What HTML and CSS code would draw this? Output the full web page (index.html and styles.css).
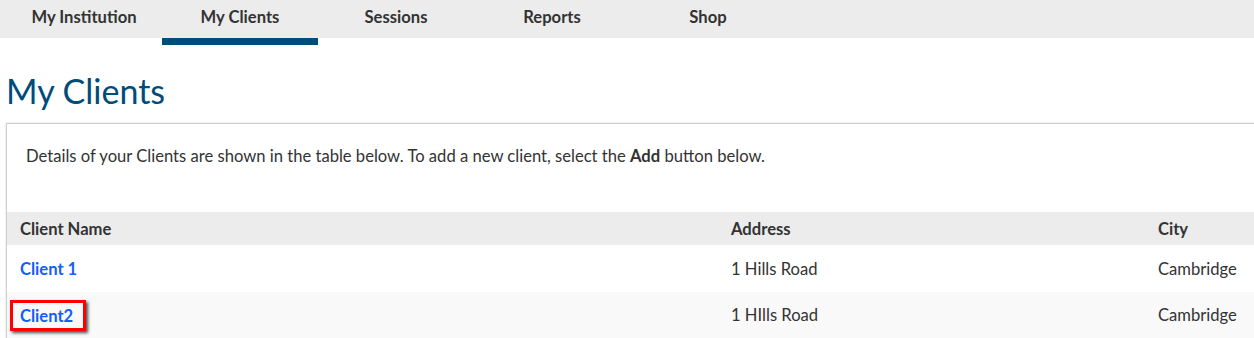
FILE: index.html
```html
<!DOCTYPE html>
<html lang="en">
<head>
  <meta charset="UTF-8" />
  <meta name="viewport" content="width=device-width, initial-scale=1.0"/>
  <title>My Clients</title>
  <link rel="stylesheet" href="styles.css">
</head>
<body>
  <nav class="topnav">
    <a class="tab" href="#">My Institution</a>
    <a class="tab active" href="#">My Clients</a>
    <a class="tab" href="#">Sessions</a>
    <a class="tab" href="#">Reports</a>
    <a class="tab" href="#">Shop</a>
  </nav>

  <h1 class="page-title">My Clients</h1>

  <div class="panel">
    <p class="intro">Details of your Clients are shown in the table below. To add a new client, select the <strong>Add</strong> button below.</p>

    <table class="clients">
      <colgroup>
        <col class="col-name">
        <col class="col-address">
        <col>
      </colgroup>
      <thead>
        <tr>
          <th>Client Name</th>
          <th>Address</th>
          <th>City</th>
        </tr>
      </thead>
      <tbody>
        <tr>
          <td><a href="#" class="client-link">Client 1</a></td>
          <td>1 Hills Road</td>
          <td>Cambridge</td>
        </tr>
        <tr class="alt">
          <td><a href="#" class="client-link highlight">Client2</a></td>
          <td>1 HIlls Road</td>
          <td>Cambridge</td>
        </tr>
      </tbody>
    </table>
  </div>
</body>
</html>
```

FILE: styles.css
```css
html, body {
  overflow: hidden;
}
body {
  margin: 0;
  background: #fff;
  color: #333;
  font-family: Lato, 'Liberation Sans', sans-serif;
  font-size: 16.6px;
}
.topnav {
  display: flex;
  height: 45px;
  padding-left: 6px;
  background: linear-gradient(#ececec 38px, #fff 38px);
}
.tab {
  width: 156px;
  height: 38px;
  line-height: 34px;
  text-align: center;
  color: #333;
  font-weight: bold;
  text-decoration: none;
  border-bottom: 7px solid transparent;
}
.tab.active {
  border-bottom-color: #004c79;
}
.page-title {
  margin: 24px 0 0 6px;
  font-size: 34px;
  font-weight: normal;
  line-height: 44px;
  color: #004c79;
}
.panel {
  margin: 10px -20px 0 6px;
  border: 1px solid #cfcfcf;
  box-shadow: 0 0 2px rgba(0, 0, 0, 0.15);
}
.intro {
  margin: 0;
  padding: 22px 19px 46px;
  line-height: 20px;
}
.clients {
  width: 100%;
  border-collapse: collapse;
  table-layout: fixed;
}
.col-name {
  width: 711px;
}
.col-address {
  width: 427px;
}
.clients th {
  text-align: left;
  font-weight: bold;
  background: #ececec;
  height: 33px;
  padding: 0 13px;
}
.clients td {
  height: 46px;
  padding: 0 13px;
}
.clients tbody tr:first-child td {
  height: 47px;
}
.clients tr.alt td {
  background: #f9f9f9;
}
.client-link {
  color: #1060f5;
  font-weight: bold;
  text-decoration: none;
}
.highlight {
  display: inline-block;
  margin-left: -10px;
  padding: 3px 10px 2px 7px;
  line-height: 20px;
  border: 3px solid #f00;
  box-shadow: 2px 2px 3px rgba(0, 0, 0, 0.7);
}
```
